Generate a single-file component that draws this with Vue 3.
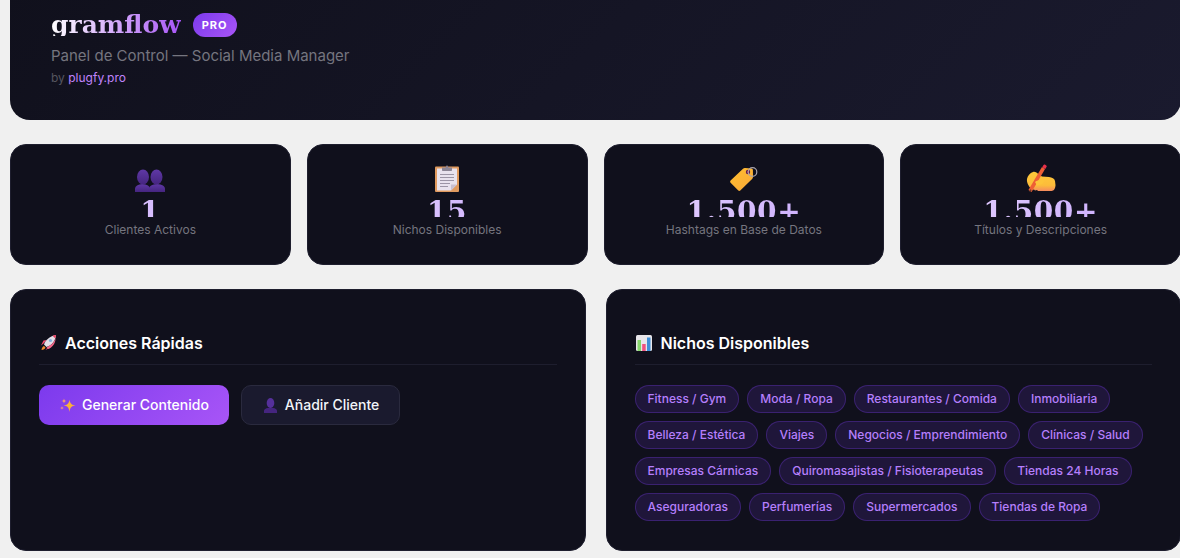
<script setup>
const stats = [
  { icon: 'group', value: '1', label: 'Clientes Activos' },
  { icon: 'clipboard', value: '15', label: 'Nichos Disponibles' },
  { icon: 'tag', value: '1.500+', label: 'Hashtags en Base de Datos' },
  { icon: 'hand', value: '1.500+', label: 'Títulos y Descripciones' }
]

const niches = [
  'Fitness / Gym',
  'Moda / Ropa',
  'Restaurantes / Comida',
  'Inmobiliaria',
  'Belleza / Estética',
  'Viajes',
  'Negocios / Emprendimiento',
  'Clínicas / Salud',
  'Empresas Cárnicas',
  'Quiromasajistas / Fisioterapeutas',
  'Tiendas 24 Horas',
  'Aseguradoras',
  'Perfumerías',
  'Supermercados',
  'Tiendas de Ropa'
]
</script>

<template>
  <div class="page">
    <header class="hero">
      <div class="brand">
        <h1 class="logo">gramflow</h1>
        <span class="badge">PRO</span>
      </div>
      <p class="subtitle">Panel de Control — Social Media Manager</p>
      <p class="byline">by <a href="#" class="byline-link">plugfy.pro</a></p>
    </header>

    <section class="stats">
      <div v-for="stat in stats" :key="stat.label" class="stat-card">
        <div class="stat-icon">
          <svg v-if="stat.icon === 'group'" viewBox="0 0 30 24" width="30" height="24">
            <defs>
              <linearGradient id="bust" x1="0" y1="0" x2="0" y2="1">
                <stop offset="0" stop-color="#5f38a6" />
                <stop offset="1" stop-color="#45257f" />
              </linearGradient>
            </defs>
            <path fill="url(#bust)" d="M0 24v-3c0-3 3-4.500 7.500-5 4.500.5 7.500 2 7.500 5v3z" />
            <path fill="url(#bust)" d="M14 24v-3c0-3 3-4.500 8-5 5 .5 8 2 8 5v3z" />
            <ellipse cx="8" cy="9" rx="6" ry="7.500" fill="url(#bust)" />
            <ellipse cx="21.500" cy="9" rx="6" ry="7.500" fill="url(#bust)" />
          </svg>

          <svg v-else-if="stat.icon === 'clipboard'" viewBox="0 0 28 28" width="28" height="28">
            <rect x="2" y="2.500" width="24" height="25.500" rx="1" fill="#e09a5f" />
            <path d="M4 4.500h20v16l-6 6H4z" fill="#e8e2ee" />
            <path d="M18 26.500l6-6h-6z" fill="#c9c0d2" />
            <path d="M9 6V3.500h3.500L14 1l1.500 2.500H19V6c0 .6-.4 1-1 1H10c-.6 0-1-.4-1-1z" fill="#8b8494" />
            <path d="M7 10.500h14M7 13.500h14M7 16.500h14M7 19.500h10M7 22.500h8" stroke="#9c95a6" stroke-width="1" />
          </svg>

          <svg v-else-if="stat.icon === 'tag'" viewBox="0 0 28 26" width="28" height="26">
            <defs>
              <linearGradient id="tagFill" x1="0" y1="0" x2="1" y2="1">
                <stop offset="0" stop-color="#ffbe2e" />
                <stop offset="1" stop-color="#f8a83a" />
              </linearGradient>
            </defs>
            <path fill="url(#tagFill)" d="M.6 14.500L13 2.700c.6-.6 1.400-.8 2.200-.7l6.300.6c.8.1 1.400.8 1.400 1.600l.1 6.700c0 .8-.3 1.500-.9 2L10.300 24.500c-.6.5-1.400.5-2 0L.6 16.700c-.6-.6-.6-1.600 0-2.200z" />
            <circle cx="18" cy="6" r="2.200" fill="#5a1f4e" />
            <circle cx="18" cy="6" r="1" fill="#d0324a" />
            <circle cx="22.500" cy="6" r="4.300" fill="none" stroke="#a9a4ad" stroke-width="1.200" />
          </svg>

          <svg v-else-if="stat.icon === 'hand'" viewBox="0 0 30 28" width="30" height="28">
            <defs>
              <linearGradient id="handFill" x1="0" y1="0" x2="0" y2="1">
                <stop offset="0" stop-color="#ffc93a" />
                <stop offset=".7" stop-color="#fcbc3a" />
                <stop offset="1" stop-color="#f58a5e" />
              </linearGradient>
            </defs>
            <path fill="url(#handFill)" d="M1 15c.5-3 3-6 6-7 2-.5 4 .5 5.500 2.500l3.500 2 7 .5c3 .3 5.500 1.500 6 4l.5 4c0 3-1.500 6-4 6H14c-1.500 0-2.500 0-3-1l-2 .5-1-1-2 .5c-1 0-1.500-1-1.500-2C2.500 22 .5 18 1 15z" />
            <path d="M4 27L17.500 4" stroke="#ee5f35" stroke-width="3.600" />
            <path d="M16.200 3.300l1.300-2.300c.3-.5.900-.7 1.400-.4l1.300.8c.5.3.7.900.4 1.400L19.300 5z" fill="#e8304a" />
            <path d="M3.400 28l.7-2.800 1.700 1z" fill="#6b3a2a" />
            <path fill="#fdc43a" d="M9 18c2.500-2 6-2.500 9-1.500l-1.500 3.500-5.500 1.500z" />
          </svg>
        </div>
        <div class="stat-value">{{ stat.value }}</div>
        <div class="stat-label">{{ stat.label }}</div>
      </div>
    </section>

    <section class="panels">
      <div class="panel">
        <h2 class="panel-title">
          <svg class="title-icon" viewBox="0 0 18 18" width="18" height="18">
            <path d="M4.500 9.500L2 11.500l2.500-5 3.500-.5z" fill="#ef4a6e" />
            <path d="M8.500 13.500L6.500 16l5-2.500.5-3.500z" fill="#ef4a6e" />
            <path d="M5 10.500c1.500-4.500 6-8.500 12-9.500-.5 6-4.500 10.500-9.500 12z" fill="#e4dfe8" />
            <path d="M7.500 13.500c4-1.500 7.500-5 9-9 .3 4-3 9-7 10.500z" fill="#f4698a" />
            <path d="M13.500 1.700c1-.3 2.300-.6 3.500-.7-.1 1.200-.3 2.400-.7 3.500z" fill="#ea3d5e" />
            <circle cx="11.500" cy="6.500" r="1.600" fill="#7fb2dc" />
            <path d="M5 12l1.500 1.500c-.6 1.300-1.800 2.300-4 2.500.2-2 1.200-3.400 2.500-4z" fill="#f28a2e" />
          </svg>
          Acciones Rápidas
        </h2>
        <div class="actions">
          <button class="btn btn-primary">
            <svg viewBox="0 0 17 16" width="17" height="16">
              <path d="M10.500 2.500c.5 4 2 5.500 6 6-4 .5-5.500 2-6 6.500-.5-4.500-2-6-6-6.500 4-.5 5.500-2 6-6z" fill="#fbb03b" />
              <path d="M5 1.500c.3 1.700.8 2.200 2.500 2.500C5.800 4.300 5.300 4.800 5 6.500 4.700 4.800 4.200 4.300 2.500 4 4.200 3.700 4.700 3.200 5 1.500z" fill="#f7a06e" />
              <path d="M3 9c.2 1.400.6 1.800 2 2-1.400.2-1.800.6-2 2-.2-1.400-.6-1.800-2-2 1.400-.2 1.800-.6 2-2z" fill="#f59a7a" />
            </svg>
            Generar Contenido
          </button>
          <button class="btn btn-secondary">
            <svg viewBox="0 0 17 16" width="17" height="16">
              <path d="M2 16v-2c0-2 2-3 6.500-3.500 4.500.5 6.500 1.500 6.500 3.500v2z" fill="#45257f" />
              <ellipse cx="8.500" cy="6" rx="3.800" ry="5" fill="#55309a" />
            </svg>
            Añadir Cliente
          </button>
        </div>
      </div>

      <div class="panel">
        <h2 class="panel-title">
          <svg class="title-icon" viewBox="0 0 18 18" width="18" height="18">
            <rect x="1" y="1" width="16" height="16" rx="1.500" fill="#e8e6ea" />
            <rect x="2.500" y="6" width="3.500" height="11" fill="#86d66b" />
            <rect x="7.200" y="10" width="3.500" height="7" fill="#f0527f" />
            <rect x="12" y="3.500" width="3.500" height="13.500" fill="#3f8fd8" />
          </svg>
          Nichos Disponibles
        </h2>
        <div class="tags">
          <span v-for="niche in niches" :key="niche" class="tag">{{ niche }}</span>
        </div>
      </div>
    </section>
  </div>
</template>

<style scoped>
.page {
  width: 1171px;
  padding-left: 10px;
  font-family: Inter, "Liberation Sans", sans-serif;
}

.hero {
  height: 144px;
  margin-top: -24px;
  box-sizing: border-box;
  padding: 37px 41px 0;
  border-radius: 0 0 20px 20px;
  background: linear-gradient(135deg, #10101c 0%, #1a1a2e 100%);
}

.brand {
  display: flex;
  align-items: center;
  gap: 12px;
  height: 24px;
}

.logo {
  margin: 0;
  font-family: "DejaVu Serif", serif;
  font-size: 25px;
  font-weight: 700;
  line-height: 22px;
  background: linear-gradient(90deg, #ffffff 0%, #a855f7 100%);
  -webkit-background-clip: text;
  background-clip: text;
  color: transparent;
}

.badge {
  padding: 0 9px;
  border-radius: 12px;
  font-size: 11px;
  font-weight: 700;
  line-height: 24px;
  letter-spacing: 1px;
  color: #fff;
  background: linear-gradient(135deg, #7c3aed, #a855f7);
}

.subtitle {
  margin: 9px 0 0;
  font-size: 15px;
  line-height: 20px;
  color: #75757f;
}

.byline {
  margin: 4px 0 0;
  font-size: 12px;
  line-height: 16px;
  color: #55555f;
}

.byline-link {
  color: #c084fc;
  text-decoration: none;
}

.stats {
  display: grid;
  grid-template-columns: repeat(4, 1fr);
  gap: 16px;
  margin-top: 24px;
}

.stat-card {
  height: 121px;
  box-sizing: border-box;
  padding-top: 19px;
  text-align: center;
  background: #10101c;
  border: 1px solid #1e1e2e;
  border-radius: 16px;
}

.stat-icon {
  display: flex;
  justify-content: center;
  align-items: flex-end;
  height: 28px;
}

.stat-value {
  height: 23px;
  margin-top: 2px;
  overflow: hidden;
  font-family: "DejaVu Serif", serif;
  font-size: 28px;
  font-weight: 700;
  line-height: 36px;
  letter-spacing: 0.6px;
  background: linear-gradient(90deg, #e9d5ff, #c4a5fc);
  -webkit-background-clip: text;
  background-clip: text;
  color: transparent;
}

.stat-label {
  margin-top: 5px;
  font-size: 12px;
  line-height: 16px;
  color: #75757f;
}

.panels {
  display: grid;
  grid-template-columns: 1fr 1fr;
  gap: 20px;
  margin-top: 24px;
}

.panel {
  height: 262px;
  box-sizing: border-box;
  padding: 42px 28px 0;
  background: #10101c;
  border: 1px solid #1e1e2e;
  border-radius: 16px;
}

.panel-title {
  display: flex;
  align-items: center;
  gap: 8px;
  margin: 0 0 20px;
  padding-bottom: 10px;
  border-bottom: 1px solid #1e1e2e;
  font-size: 16px;
  font-weight: 600;
  line-height: 22px;
  color: #fff;
}

.actions {
  display: flex;
  gap: 12px;
}

.btn {
  display: flex;
  align-items: center;
  gap: 6px;
  height: 40px;
  box-sizing: border-box;
  padding: 0 20px 1px;
  border-radius: 10px;
  font-family: inherit;
  font-size: 14px;
  font-weight: 500;
  color: #fff;
  cursor: pointer;
}

.btn-primary {
  border: none;
  background: linear-gradient(135deg, #7c3aed, #a855f7);
}

.btn-secondary {
  border: 1px solid #2a2a3e;
  background: #1a1a2e;
  color: #f1f5f9;
}

.tags {
  display: flex;
  flex-wrap: wrap;
  gap: 8px;
}

.tag {
  height: 28px;
  box-sizing: border-box;
  padding: 0 12px;
  border: 1px solid rgba(124, 58, 237, 0.3);
  border-radius: 14px;
  background: rgba(124, 58, 237, 0.15);
  font-size: 12px;
  font-weight: 500;
  line-height: 26px;
  color: #b57ffc;
}
</style>

<style>
html,
body {
  margin: 0;
  height: 558px;
  overflow: hidden;
  background: #f0f0f0;
}
</style>
